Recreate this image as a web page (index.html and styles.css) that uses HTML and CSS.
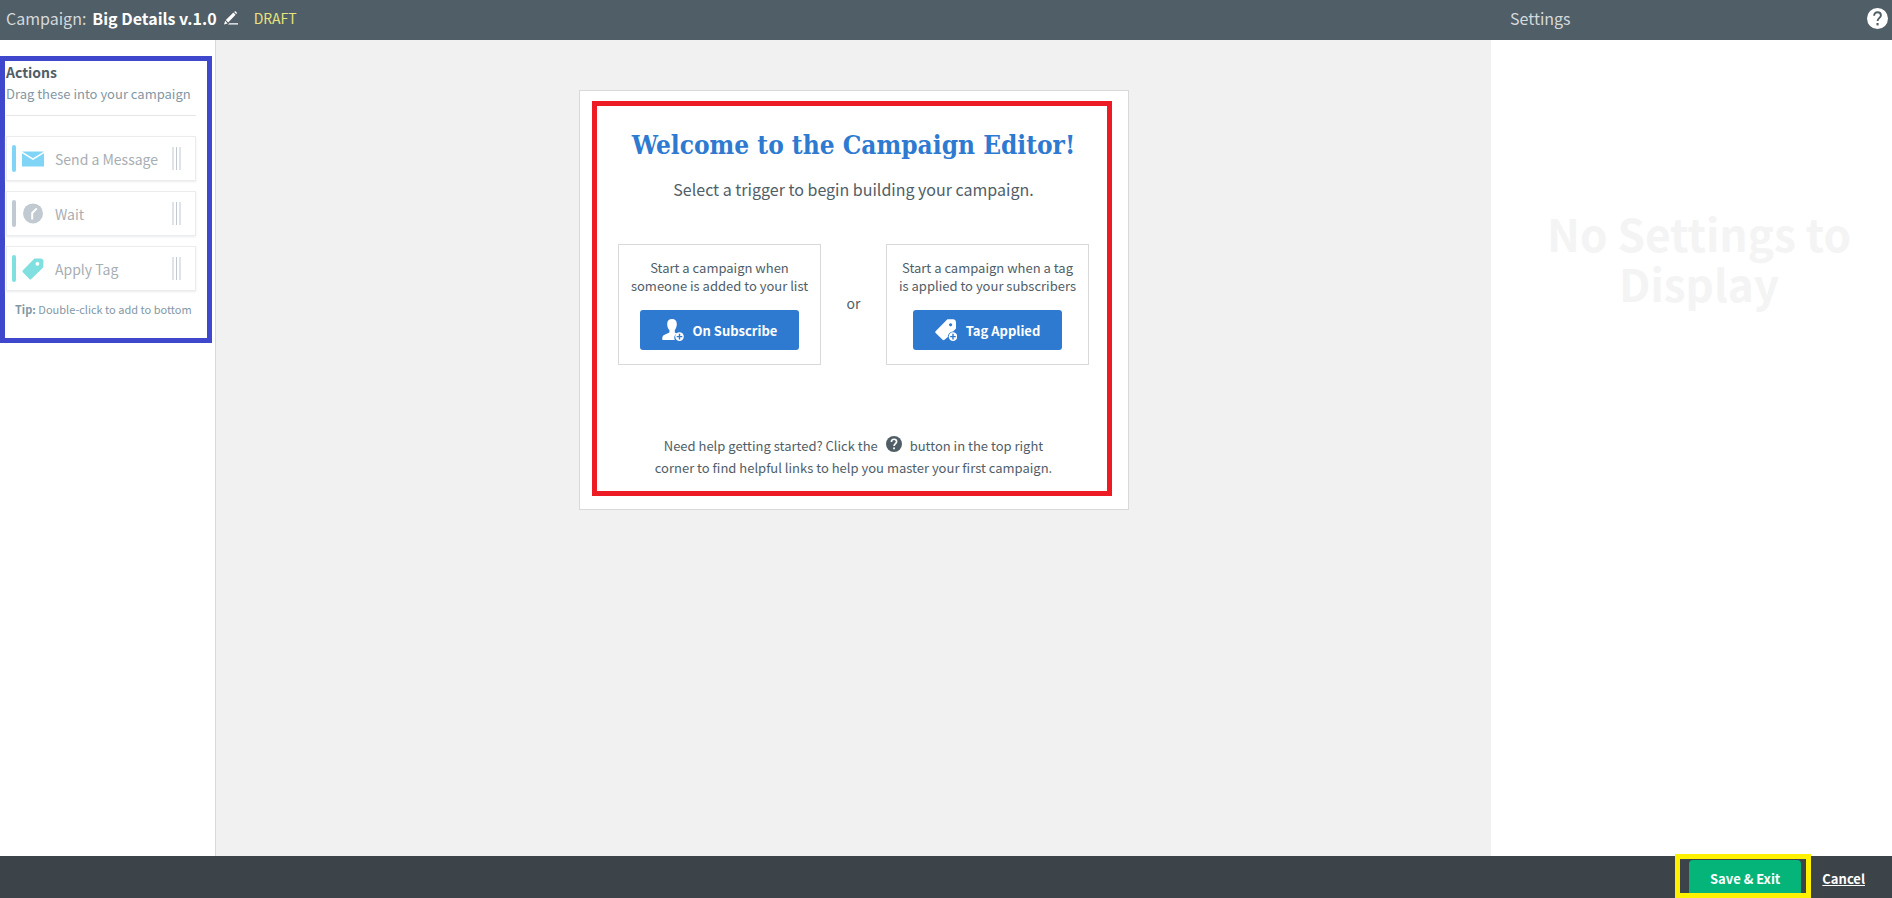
FILE: index.html
```html
<!DOCTYPE html>
<html lang="en">

<head>
    <meta charset="UTF-8">
    <meta name="viewport" content="width=device-width, initial-scale=1.0">
    <title>Campaign: Big Details v.1.0</title>
    <link rel="stylesheet" href="styles.css">
</head>

<body>
    <header class="topbar">
        <div class="campaign">
            <span class="campaign-label">Campaign:</span>
            <h1 class="campaign-name">Big Details v.1.0</h1>
            <button type="button" class="icon-btn edit" aria-label="Edit name">
                <svg width="14" height="14" viewBox="0 0 14 14">
                    <path d="M0 13.6L1.2 9.8L3.6 12.4Z M1.8 9L9.4 1.6L11.6 3.8L4.2 11.6Z M10.2 1L11.2 0L13.2 2L12.2 3Z M5.4 12.2H14V13.6H4Z" fill="#fff" />
                </svg>
            </button>
            <span class="status">DRAFT</span>
        </div>
        <div class="settings-head">
            <h2>Settings</h2>
            <button type="button" class="icon-btn" aria-label="Help">
                <svg width="21" height="21" viewBox="0 0 21 21">
                    <circle cx="10.5" cy="10.5" r="10.5" fill="#fff" />
                    <path d="M7.1 7.8C7.1 5.7 8.6 4.3 10.5 4.3C12.4 4.3 13.9 5.6 13.9 7.4C13.9 9.9 10.6 10 10.6 13.1" fill="none" stroke="#505e67" stroke-width="1.9" />
                    <rect x="9.5" y="15" width="2.1" height="2.4" fill="#505e67" />
                </svg>
            </button>
        </div>
    </header>

    <div class="editor">
        <aside class="sidebar">
            <section class="actions">
                <div class="actions-head">
                    <h2>Actions</h2>
                    <p>Drag these into your campaign</p>
                </div>
                <ul class="action-list">
                    <li class="action message">
                        <svg class="action-icon" width="22" height="22" viewBox="0 0 22 22">
                            <path d="M0 3.4H22L11 10.2Z M0 5.2L11 12L22 5.2V18.4H0Z" fill="#80d5f7" />
                        </svg>
                        <span class="action-name">Send a Message</span>
                        <span class="grip"></span>
                    </li>
                    <li class="action wait">
                        <svg class="action-icon" width="22" height="22" viewBox="0 0 22 22">
                            <circle cx="11" cy="10.4" r="10" fill="#c1c9d1" />
                            <path d="M10.2 16.4V10L14.8 5.4" fill="none" stroke="#fff" stroke-width="2" />
                        </svg>
                        <span class="action-name">Wait</span>
                        <span class="grip"></span>
                    </li>
                    <li class="action tag">
                        <svg class="action-icon" width="22" height="22" viewBox="0 0 22 22">
                            <path fill-rule="evenodd" d="M12.4 0.5H18.2Q21.5 0.5 21.5 3.5L21.2 9.6L9 21.3Q8.3 21.8 7.6 21.2L0.6 14Q0.2 13.2 0.7 12.5Z M15.4 3.9a1.9 1.9 0 1 0 0.01 0Z" fill="#80dfdf" />
                        </svg>
                        <span class="action-name">Apply Tag</span>
                        <span class="grip"></span>
                    </li>
                </ul>
                <p class="tip"><b>Tip:</b> Double-click to add to bottom</p>
            </section>
        </aside>

        <main class="canvas">
            <div class="welcome">
                <div class="welcome-inner">
                    <h2 class="welcome-title">Welcome to the Campaign Editor!</h2>
                    <p class="welcome-sub">Select a trigger to begin building your campaign.</p>
                    <div class="triggers">
                        <div class="trigger">
                            <p>Start a campaign when<br>someone is added to your list</p>
                            <button type="button" class="btn">
                                <svg width="22" height="22" viewBox="0 0 22 22">
                                    <path d="M10 0C13 0 14.8 1.8 14.8 5C14.8 8 13.8 9.6 12.8 11V13.4L15 14.6A5 5 0 0 0 12.8 21H0.4C0 18.4 0.4 16.6 2.6 15.8L7.4 13.4V11C6 9.6 5.2 8 5.2 5C5.2 1.8 7 0 10 0Z" fill="#fff" />
                                    <circle cx="17.5" cy="17.6" r="4.3" fill="#fff" />
                                    <path d="M17.5 14.8V20.4M14.7 17.6H20.3" stroke="#2e7ad1" stroke-width="1.4" />
                                </svg>
                                On Subscribe
                            </button>
                        </div>
                        <span class="or">or</span>
                        <div class="trigger">
                            <p>Start a campaign when a tag<br>is applied to your subscribers</p>
                            <button type="button" class="btn">
                                <svg width="22" height="22" viewBox="0 0 22 22">
                                    <path fill-rule="evenodd" d="M12.4 0.2H18.4Q20.8 0.4 21 3L21 9.6L18 12.6A5.2 5.2 0 0 0 12.8 18L9.2 21Q8.4 21.4 7.6 20.8L0.4 13.8Q0 13 0.6 12.2Z M15.6 4.2a1.6 1.6 0 1 0 0.01 0Z" fill="#fff" />
                                    <circle cx="18" cy="17.6" r="4.3" fill="#fff" />
                                    <path d="M18 14.8V20.4M15.2 17.6H20.8" stroke="#2e7ad1" stroke-width="1.4" />
                                </svg>
                                Tag Applied
                            </button>
                        </div>
                    </div>
                    <p class="help-text">
                        Need help getting started? Click the
                        <svg class="help-inline" width="16" height="16" viewBox="0 0 21 21">
                            <circle cx="10.5" cy="10.5" r="10.5" fill="#505e67" />
                            <path d="M7.1 7.8C7.1 5.7 8.6 4.3 10.5 4.3C12.4 4.3 13.9 5.6 13.9 7.4C13.9 9.9 10.6 10 10.6 13.1" fill="none" stroke="#fff" stroke-width="2.2" />
                            <rect x="9.4" y="15" width="2.3" height="2.4" fill="#fff" />
                        </svg>
                        button in the top right<br>corner to find helpful links to help you master your first campaign.
                    </p>
                </div>
            </div>
        </main>

        <aside class="settings">
            <p class="settings-empty">No Settings to Display</p>
        </aside>
    </div>

    <footer class="bottombar">
        <div class="save-wrap">
            <button type="button" class="save">Save &amp; Exit</button>
        </div>
        <a href="#" class="cancel">Cancel</a>
    </footer>
</body>

</html>
```
FILE: styles.css
```css
* {
    margin: 0;
    padding: 0;
    box-sizing: border-box;
}

body {
    display: flex;
    flex-direction: column;
    height: 100vh;
    overflow: hidden;
    font-family: "Noto Sans CJK SC", "Source Sans Pro", sans-serif;
    font-size: 14px;
    color: #505e67;
    background-color: #fff;
}

ul {
    list-style: none;
}

button {
    font-family: inherit;
    border: none;
    cursor: pointer;
}

.icon-btn {
    display: flex;
    background: none;
}

/* top bar */
.topbar {
    display: flex;
    height: 40px;
    background-color: #505e67;
}

.campaign {
    flex: 1;
    display: flex;
    align-items: center;
    padding: 0 6px 4px;
    font-size: 16px;
    line-height: 24px;
}

.campaign-label {
    color: #d5d9db;
}

.campaign-name {
    margin-left: 6px;
    font-size: 16px;
    color: #fff;
}

.edit {
    margin-left: 7px;
}

.status {
    margin-left: 16px;
    font-size: 14px;
    color: #e8e37a;
}

.settings-head {
    display: flex;
    justify-content: space-between;
    align-items: center;
    width: 401px;
    padding: 0 4px 4px 19px;
}

.settings-head h2 {
    font-size: 16px;
    font-weight: normal;
    line-height: 24px;
    color: #d5d9db;
}

/* three columns */
.editor {
    flex: 1;
    display: flex;
    min-height: 0;
}

.sidebar {
    width: 216px;
    padding-top: 16px;
    border-right: 1px solid #d9d9d9;
}

.actions {
    width: 212px;
    padding: 0 11px 20px 1px;
    border: 5px solid #3f48cc;
}

.actions-head {
    padding-bottom: 12px;
    margin-bottom: 20px;
    border-bottom: 1px solid #e5e6e8;
}

.actions-head h2 {
    margin-bottom: 2px;
    font-size: 14px;
    line-height: 22px;
}

.actions-head p {
    font-size: 13px;
    line-height: 18px;
    color: #8397a4;
}

.action-list {
    display: flex;
    flex-direction: column;
    gap: 10px;
}

.action {
    display: flex;
    align-items: center;
    height: 45px;
    padding: 0 14px 0 5px;
    border: 1px solid #ebecee;
    box-shadow: 0 1px 2px #ebecee;
    cursor: move;
}

.action::before {
    content: "";
    width: 4px;
    height: 27px;
    border-radius: 2px;
}

.message::before {
    background-color: #80d5f7;
}

.wait::before {
    background-color: #c1c9d1;
}

.tag::before {
    background-color: #80dfdf;
}

.action-icon {
    margin-left: 6px;
}

.action-name {
    flex: 1;
    margin-left: 11px;
    font-size: 14px;
    color: #a7aeb3;
}

.grip {
    width: 9px;
    height: 23px;
    border: solid #e0e4e8;
    border-width: 0 2px;
    background: linear-gradient(#c1c9d1, #c1c9d1) center / 1px 100% no-repeat;
}

.tip {
    margin: 9px 0 0 9px;
    font-size: 11px;
    line-height: 18px;
    color: #8397a4;
}

/* canvas */
.canvas {
    flex: 1;
    display: flex;
    justify-content: center;
    align-items: flex-start;
    padding: 50px 0 0 1px;
    background-color: #f1f1f1;
}

.welcome {
    width: 550px;
    padding: 10px 16px 13px 12px;
    border: 1px solid #d9d9d9;
    background-color: #fff;
}

.welcome-inner {
    padding: 21px 18px 12px 21px;
    border: 5px solid #ed1c24;
    text-align: center;
}

.welcome-title {
    font-family: "DejaVu Serif Condensed", "DejaVu Serif", serif;
    font-size: 26px;
    font-weight: bold;
    line-height: 36px;
    color: #2e7ad1;
    white-space: nowrap;
}

.welcome-sub {
    margin-top: 12px;
    font-size: 16px;
    line-height: 28px;
}

.triggers {
    display: flex;
    justify-content: space-between;
    align-items: center;
    margin-top: 41px;
}

.trigger {
    display: flex;
    flex-direction: column;
    align-items: center;
    width: 203px;
    padding: 14px 0;
    border: 1px solid #d9d9d9;
}

.trigger p {
    font-size: 13px;
    line-height: 18px;
    white-space: nowrap;
}

.btn {
    display: flex;
    align-items: center;
    gap: 9px;
    height: 40px;
    margin-top: 15px;
    padding: 0 22px;
    border-radius: 3px;
    font-size: 13px;
    font-weight: bold;
    color: #fff;
    background-color: #2e7ad1;
}

.or {
    padding-bottom: 4px;
}

.help-text {
    margin-top: 70px;
    font-size: 13px;
    line-height: 22px;
    white-space: nowrap;
}

.help-inline {
    margin: 0 5px;
    vertical-align: -1px;
}

/* settings */
.settings {
    width: 401px;
    padding: 168px 35px 0 50px;
}

.settings-empty {
    font-size: 44px;
    font-weight: bold;
    line-height: 50px;
    text-align: center;
    color: #f4f4f4;
}

/* bottom bar */
.bottombar {
    display: flex;
    justify-content: flex-end;
    align-items: center;
    padding: 4px 27px 2px;
    background-color: #3c444a;
}

.save-wrap {
    position: relative;
}

.save-wrap::after {
    content: "";
    position: absolute;
    top: -6px;
    right: -10px;
    bottom: -2px;
    left: -14px;
    border: 5px solid #fff200;
    pointer-events: none;
}

.save {
    display: block;
    height: 36px;
    padding: 0 21px;
    border-radius: 4px;
    font-size: 13px;
    font-weight: bold;
    color: #fff;
    background-color: #04b479;
}

.cancel {
    margin-left: 21px;
    font-size: 13px;
    font-weight: bold;
    color: #fff;
}
```
